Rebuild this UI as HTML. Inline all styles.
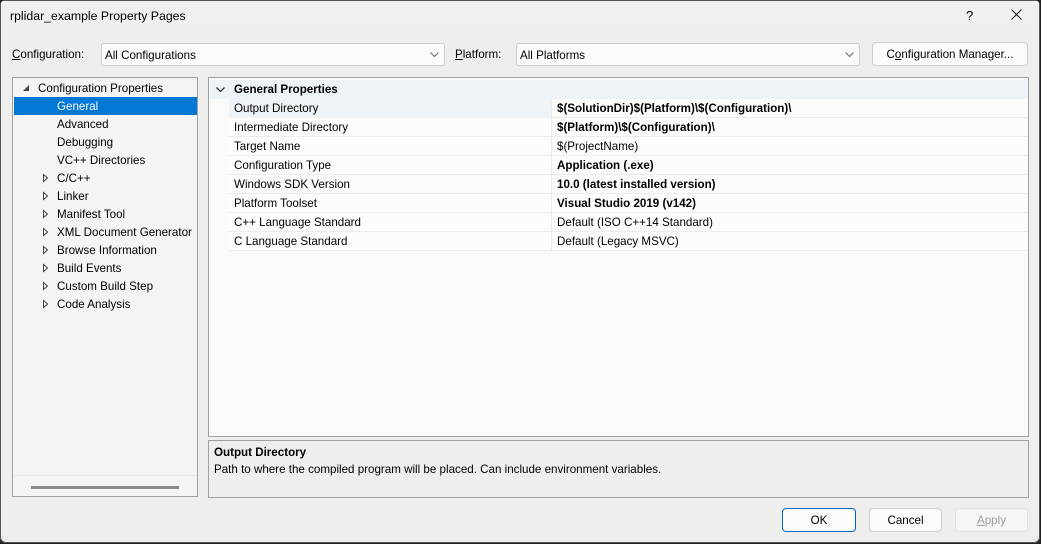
<!DOCTYPE html>
<html><head><style>
*{box-sizing:border-box;margin:0;padding:0}
body{width:1041px;height:544px;overflow:hidden;background:#202020;font-family:"Liberation Sans",sans-serif;font-size:11.6px;color:#000}
.win{position:absolute;left:0;top:0;width:1040px;height:543px;background:#eeeeec;box-shadow:inset 0 0 0 1px #555;border-radius:6px;overflow:hidden}
.title{position:absolute;left:1px;top:1px;width:1038px;height:30px;background:#f0f0ef}
.t{position:absolute;white-space:nowrap}
.combo{position:absolute;height:23px;background:#fbfbfb;border:1px solid #cfcfcf;border-radius:3px}
.btn{position:absolute;height:24px;background:#fbfbfb;border:1px solid #cfcfcf;border-radius:4px;text-align:center;line-height:23px}
.tree{position:absolute;left:12px;top:77px;width:186px;height:420px;background:#f4f4f2;border:1px solid #a0a0a0}
.ti{position:absolute;height:18px;line-height:20px;white-space:nowrap}
.grid{position:absolute;left:208px;top:77px;width:821px;height:360px;background:#fafbf9;border:1px solid #a0a0a0}
.row{position:absolute;left:20px;width:799px;height:19px;border-bottom:1px solid #ececec;background:#fcfdfb}
.row span{position:absolute;top:3px;white-space:nowrap}
.row .v{left:328px}
.row .sep{position:absolute;left:322px;top:0;width:1px;height:19px;background:#ececec}
.desc{position:absolute;left:208px;top:440px;width:821px;height:58px;background:#eeefec;border:1px solid #a0a0a0}
</style></head><body>
<div class="win">
<div class="title"></div>
<div class="t" style="left:10px;top:9px;font-size:12.3px">rplidar_example Property Pages</div>
<div class="t" style="left:966px;top:8px;font-size:13px">?</div>
<svg style="position:absolute;left:1011px;top:9px" width="11" height="11"><path d="M0.5 0.5L10.5 10.5M10.5 0.5L0.5 10.5" stroke="#222" stroke-width="1.1"/></svg>

<div class="t" style="left:12px;top:48px"><u>C</u>onfiguration:</div>
<div class="combo" style="left:101px;top:43px;width:344px"><span class="t" style="left:3px;top:5px">All Configurations</span>
<svg style="position:absolute;right:5px;top:8px" width="9" height="6"><path d="M0.5 0.5L4.5 4.5L8.5 0.5" stroke="#666" fill="none"/></svg></div>
<div class="t" style="left:455px;top:48px"><u>P</u>latform:</div>
<div class="combo" style="left:516px;top:43px;width:344px"><span class="t" style="left:3px;top:5px">All Platforms</span>
<svg style="position:absolute;right:5px;top:8px" width="9" height="6"><path d="M0.5 0.5L4.5 4.5L8.5 0.5" stroke="#666" fill="none"/></svg></div>
<div class="btn" style="left:872px;top:42px;width:156px">C<u>o</u>nfiguration Manager...</div>

<div class="tree">
<svg style="position:absolute;left:10px;top:7px" width="7" height="6"><path d="M6 0L6 6L0 6Z" fill="#444"/></svg>
<div class="ti" style="left:25px;top:1px">Configuration Properties</div>
<div class="ti" style="left:1px;top:19px;width:183px;background:#0078d4;color:#fff;padding-left:43px">General</div>
<div class="ti" style="left:44px;top:37px">Advanced</div>
<div class="ti" style="left:44px;top:55px">Debugging</div>
<div class="ti" style="left:44px;top:73px">VC++ Directories</div>
<svg style="position:absolute;left:30px;top:96px" width="6" height="200"><g fill="none" stroke="#444"><path d="M0.5 0.5L4.5 4L0.5 7.5Z"/><path d="M0.5 18.5L4.5 22L0.5 25.5Z"/><path d="M0.5 36.5L4.5 40L0.5 43.5Z"/><path d="M0.5 54.5L4.5 58L0.5 61.5Z"/><path d="M0.5 72.5L4.5 76L0.5 79.5Z"/><path d="M0.5 90.5L4.5 94L0.5 97.5Z"/><path d="M0.5 108.5L4.5 112L0.5 115.5Z"/><path d="M0.5 126.5L4.5 130L0.5 133.5Z"/></g></svg>
<div class="ti" style="left:44px;top:91px">C/C++</div>
<div class="ti" style="left:44px;top:109px">Linker</div>
<div class="ti" style="left:44px;top:127px">Manifest Tool</div>
<div class="ti" style="left:44px;top:145px">XML Document Generator</div>
<div class="ti" style="left:44px;top:163px">Browse Information</div>
<div class="ti" style="left:44px;top:181px">Build Events</div>
<div class="ti" style="left:44px;top:199px">Custom Build Step</div>
<div class="ti" style="left:44px;top:217px">Code Analysis</div>
<div style="position:absolute;left:0;top:397px;width:184px;height:1px;background:#e6e6e6"></div>
<div style="position:absolute;left:18px;top:408px;width:148px;height:3px;background:#8a8a8a"></div>
</div>

<div class="grid">
<div style="position:absolute;left:0;top:2px;width:819px;height:19px;background:#eef3f7"></div>
<svg style="position:absolute;left:7px;top:9px" width="9" height="6"><path d="M0.5 0.5L4.5 4.5L8.5 0.5" stroke="#333" stroke-width="1.3" fill="none"/></svg>
<div class="t" style="left:25px;top:5px;font-weight:bold">General Properties</div>
<div class="row" style="top:21px"><div style="position:absolute;left:0;top:0;width:322px;height:19px;background:#eef3f7"></div><div class="sep"></div><span style="left:5px">Output Directory</span><span class="v"><b>$(SolutionDir)$(Platform)\$(Configuration)\</b></span></div>
<div class="row" style="top:40px"><div class="sep"></div><span style="left:5px">Intermediate Directory</span><span class="v"><b>$(Platform)\$(Configuration)\</b></span></div>
<div class="row" style="top:59px"><div class="sep"></div><span style="left:5px">Target Name</span><span class="v">$(ProjectName)</span></div>
<div class="row" style="top:78px"><div class="sep"></div><span style="left:5px">Configuration Type</span><span class="v"><b>Application (.exe)</b></span></div>
<div class="row" style="top:97px"><div class="sep"></div><span style="left:5px">Windows SDK Version</span><span class="v"><b>10.0 (latest installed version)</b></span></div>
<div class="row" style="top:116px"><div class="sep"></div><span style="left:5px">Platform Toolset</span><span class="v"><b>Visual Studio 2019 (v142)</b></span></div>
<div class="row" style="top:135px"><div class="sep"></div><span style="left:5px">C++ Language Standard</span><span class="v">Default (ISO C++14 Standard)</span></div>
<div class="row" style="top:154px"><div class="sep"></div><span style="left:5px">C Language Standard</span><span class="v">Default (Legacy MSVC)</span></div>
</div>

<div class="desc">
<div class="t" style="left:5px;top:5px;font-weight:bold">Output Directory</div>
<div class="t" style="left:5px;top:22px">Path to where the compiled program will be placed. Can include environment variables.</div>
</div>

<div class="btn" style="left:782px;top:508px;width:74px;border:1px solid #0067c0">OK</div>
<div class="btn" style="left:869px;top:508px;width:73px">Cancel</div>
<div class="btn" style="left:955px;top:508px;width:73px;color:#a0a0a0;background:#f5f5f4;border-color:#e2e2e2"><u>A</u>pply</div>
</div>
</body></html>
